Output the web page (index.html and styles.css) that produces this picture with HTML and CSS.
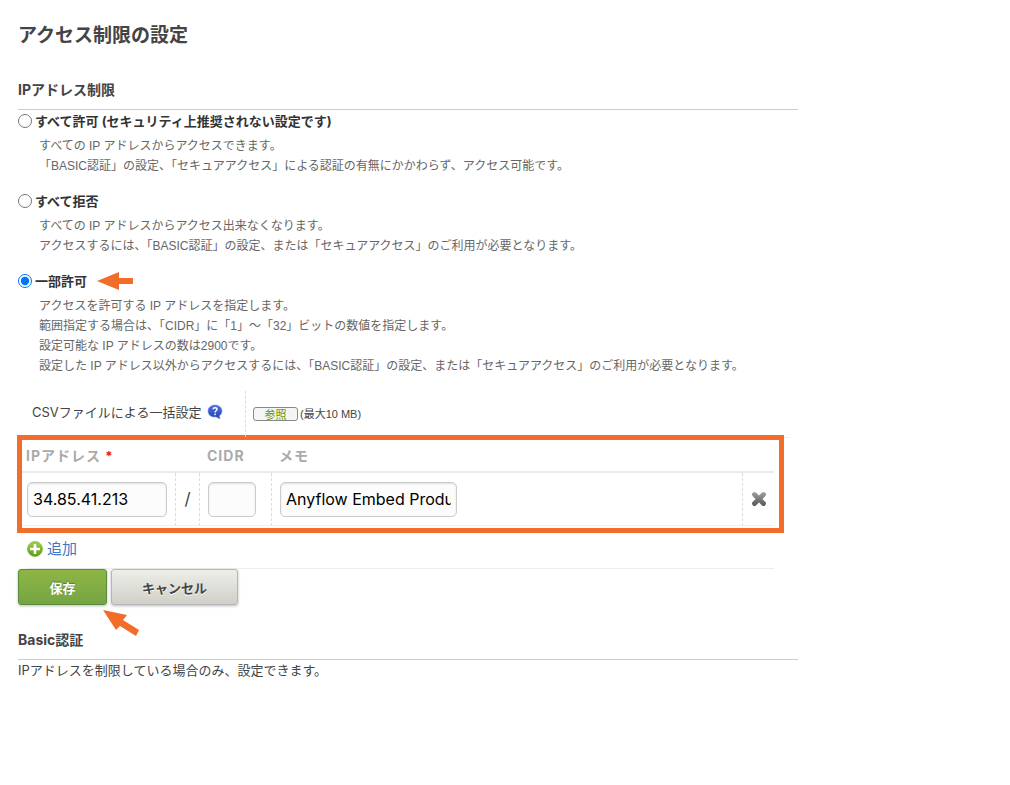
FILE: index.html
```html
<!DOCTYPE html>
<html lang="ja">
<head>
  <meta charset="UTF-8" />
  <meta name="viewport" content="width=device-width, initial-scale=1.0" />
  <title>アクセス制限の設定</title>
  <link rel="stylesheet" href="styles.css">
</head>
<body>
<main class="container">
  <h1>アクセス制限の設定</h1>

  <form>
    <h2>IPアドレス制限</h2>

    <div class="option">
      <label class="option-label"><input type="radio" name="restrict" value="all" />すべて許可 (セキュリティ上推奨されない設定です)</label>
      <p>すべての IP アドレスからアクセスできます。<br/>「BASIC認証」の設定、「セキュアアクセス」による認証の有無にかかわらず、アクセス可能です。</p>
    </div>

    <div class="option">
      <label class="option-label"><input type="radio" name="restrict" value="none" />すべて拒否</label>
      <p>すべての IP アドレスからアクセス出来なくなります。<br/>アクセスするには、「BASIC認証」の設定、または「セキュアアクセス」のご利用が必要となります。</p>
    </div>

    <div class="option">
      <label class="option-label"><input type="radio" name="restrict" value="part" checked />一部許可
        <svg class="arrow" width="36" height="18" viewBox="0 0 36 18"><path d="M0 9L22 0V6H36V12H22V18Z" fill="#f26c2a"/></svg>
      </label>
      <p>アクセスを許可する IP アドレスを指定します。<br/>範囲指定する場合は、「CIDR」に「1」〜「32」ビットの数値を指定します。<br/>設定可能な IP アドレスの数は2900です。<br/>設定した IP アドレス以外からアクセスするには、「BASIC認証」の設定、または「セキュアアクセス」のご利用が必要となります。</p>
    </div>

    <div class="csv-row">
      <div class="csv-label">CSVファイルによる一括設定
        <svg width="16" height="16" viewBox="0 0 16 16">
          <defs>
            <linearGradient id="helpBlue" x1="0" y1="0" x2="0" y2="1"><stop offset="0" stop-color="#4a6fe0"/><stop offset="1" stop-color="#2443b8"/></linearGradient>
          </defs>
          <path d="M8 1C12 1 15 3.500 15 7C15 9 14 10.800 12.500 11.800L13 15L9 13C4 13.500 1 11 1 7C1 3.500 4 1 8 1Z" fill="url(#helpBlue)" stroke="#8fa3e4" stroke-width="0.600"/>
          <path d="M6 5.200C6.200 3.200 10 3.200 10 5.300C10 6.800 8.100 6.700 8.100 8.400" fill="none" stroke="#fff" stroke-width="1.500"/>
          <circle cx="8.100" cy="10.300" r="0.900" fill="#fff"/>
        </svg>
      </div>
      <div class="csv-file">
        <button type="button" class="browse">参照</button>
        <span>(最大10 MB)</span>
      </div>
    </div>

    <div class="ip-box">
      <table id="ipTable">
        <colgroup>
          <col class="col-ip"><col class="col-slash"><col class="col-cidr"><col><col class="col-delete">
        </colgroup>
        <thead>
          <tr>
            <th>IPアドレス <span class="required">*</span></th>
            <th></th>
            <th>CIDR</th>
            <th>メモ</th>
            <th></th>
          </tr>
        </thead>
        <tbody>
          <tr>
            <td><input type="text" class="ip" aria-label="IPアドレス" value="34.85.41.213" /></td>
            <td class="slash">/</td>
            <td><input type="text" class="cidr" aria-label="CIDR" /></td>
            <td><input type="text" class="memo" aria-label="メモ" value="Anyflow Embed Production" /></td>
            <td class="delete">
              <button type="button" aria-label="削除">
                <svg width="16" height="16" viewBox="0 0 16 16">
                  <defs>
                    <linearGradient id="crossGray" gradientUnits="userSpaceOnUse" x1="0" y1="1" x2="0" y2="15"><stop offset="0" stop-color="#a2a2a2"/><stop offset="1" stop-color="#555"/></linearGradient>
                  </defs>
                  <path d="M3.500 3.500L12.500 12.500M12.500 3.500L3.500 12.500" stroke="url(#crossGray)" stroke-width="4.800" stroke-linecap="round"/>
                </svg>
              </button>
            </td>
          </tr>
        </tbody>
      </table>
    </div>

    <div class="add-row">
      <a href="#">
        <svg width="16" height="16" viewBox="0 0 16 16">
          <defs>
            <linearGradient id="addGreen" x1="0" y1="0" x2="0" y2="1"><stop offset="0" stop-color="#a5cf4c"/><stop offset="1" stop-color="#559d13"/></linearGradient>
          </defs>
          <circle cx="8" cy="8" r="7.500" fill="url(#addGreen)" stroke="#86b94b" stroke-width="0.800"/>
          <path d="M8 3V13M3 8H13" stroke="#fff" stroke-width="2.600"/>
        </svg>追加</a>
    </div>

    <div class="buttons">
      <button type="submit" class="save">保存</button>
      <button type="button" class="cancel">キャンセル</button>
      <svg class="save-arrow" width="38" height="28" viewBox="0 0 38 28"><path d="M0 1L24 6L20 11L36 21L33 27L17 17L13 21Z" fill="#f26c2a"/></svg>
    </div>
  </form>

  <h2>Basic認証</h2>
  <p class="note">IPアドレスを制限している場合のみ、設定できます。</p>
</main>
</body>
</html>
```
FILE: styles.css
```css
body {
  margin: 0;
  background: #fff;
  color: #444;
  font-family: Inter, "Noto Sans CJK JP", sans-serif;
  font-size: 13px;
  line-height: 20px;
}
.container {
  max-width: 780px;
  padding: 22px 18px;
}
h1 {
  margin: 0 0 28px;
  font-size: 19px;
  line-height: 28px;
}
h2 {
  margin: 0;
  padding-bottom: 7px;
  border-bottom: 1px solid #ccc;
  font-size: 14px;
  line-height: 24px;
}
.option {
  margin: 1px 0 15px;
}
.option-label {
  display: flex;
  align-items: center;
  color: #333;
  font-weight: bold;
}
.option-label input {
  width: 14px;
  height: 14px;
  margin: 0 3px 0 0;
}
.option p {
  margin: 5px 0 0 21px;
  color: #666;
  font-family: "Liberation Sans", "Noto Sans CJK JP", sans-serif;
  font-size: 12px;
}
.arrow {
  margin-left: 10px;
}
.csv-row {
  display: flex;
  width: calc(100% - 8px);
  height: 46px;
  border-bottom: 1px solid #eee;
}
.csv-label {
  display: flex;
  align-items: center;
  gap: 6px;
  box-sizing: border-box;
  width: 228px;
  padding: 0 0 4px 14px;
  border-right: 1px dashed #ddd;
}
.csv-file {
  display: flex;
  align-items: center;
  gap: 2px;
  padding-left: 7px;
  font-family: "Liberation Sans", "Noto Sans CJK JP", sans-serif;
  font-size: 11px;
}
.browse {
  width: 45px;
  height: 14px;
  padding: 0;
  border: 1px solid #888;
  border-radius: 3px;
  background: #f5f5f5;
  color: #690;
  font: 11px/12px "Noto Sans CJK JP", sans-serif;
}
.ip-box {
  width: calc(100% - 23px);
  margin: -3px 0 0 -1px;
  border: 5px solid #f26c2a;
}
table {
  width: calc(100% - 5px);
  margin-bottom: 2px;
  border-collapse: separate;
  border-spacing: 0;
  table-layout: fixed;
}
.col-ip {
  width: 154px;
}
.col-slash {
  width: 24px;
}
.col-cidr {
  width: 72px;
}
.col-delete {
  width: 31px;
}
th {
  height: 31px;
  padding: 0 0 0 4px;
  border-bottom: 2px solid #eaeaea;
  color: #aaa;
  font-size: 14px;
  letter-spacing: 1px;
  text-align: left;
}
th + th {
  padding-left: 7px;
}
.required {
  color: #d22;
  font-size: 13px;
}
td {
  height: 52px;
  padding: 0 0 0 8px;
  border-right: 1px dashed #ddd;
  border-bottom: 1px solid #eee;
}
td:first-child {
  padding-left: 5px;
}
td.slash {
  padding: 0;
  font-size: 17px;
  text-align: center;
}
td.delete {
  padding: 0;
  border-right: none;
  text-align: center;
}
td input {
  box-sizing: border-box;
  height: 35px;
  padding: 0 5px;
  border: 1px solid #ccc;
  border-radius: 5px;
  background: #fcfcfc;
  box-shadow: inset 0 1px 2px #ddd;
  color: #000;
  font: 16px Inter, sans-serif;
}
.ip {
  width: 140px;
}
.cidr {
  width: 48px;
}
.memo {
  width: 177px;
}
.delete button {
  display: block;
  width: 16px;
  height: 16px;
  margin: 0 auto;
  padding: 0;
  border: none;
  background: none;
}
.add-row {
  display: flex;
  align-items: center;
  width: calc(100% - 33px);
  height: 35px;
  margin-left: 9px;
  border-bottom: 1px solid #eee;
}
.add-row a {
  display: flex;
  align-items: center;
  gap: 4px;
  padding-bottom: 4px;
  color: #3c78c8;
  font-size: 15px;
  text-decoration: none;
}
.buttons {
  display: flex;
  gap: 4px;
  position: relative;
  margin-bottom: 23px;
}
.buttons button {
  height: 36px;
  padding: 0;
  border: 1px solid #5b8c38;
  border-radius: 3px;
  box-shadow: 0 1px 3px #bbb;
  font: bold 13px "Noto Sans CJK JP", sans-serif;
}
.buttons .save {
  width: 89px;
  background: linear-gradient(#8db645, #76a444);
  color: #fff;
  text-shadow: 0 -1px 1px #587d30;
}
.buttons .cancel {
  width: 127px;
  border-color: #b5b5b5;
  background: linear-gradient(#eeeeea, #d0d0c8);
  color: #444;
  text-shadow: 0 1px 0 #fff;
}
.save-arrow {
  position: absolute;
  top: 40px;
  left: 85px;
}
.note {
  margin: 0;
}
```
